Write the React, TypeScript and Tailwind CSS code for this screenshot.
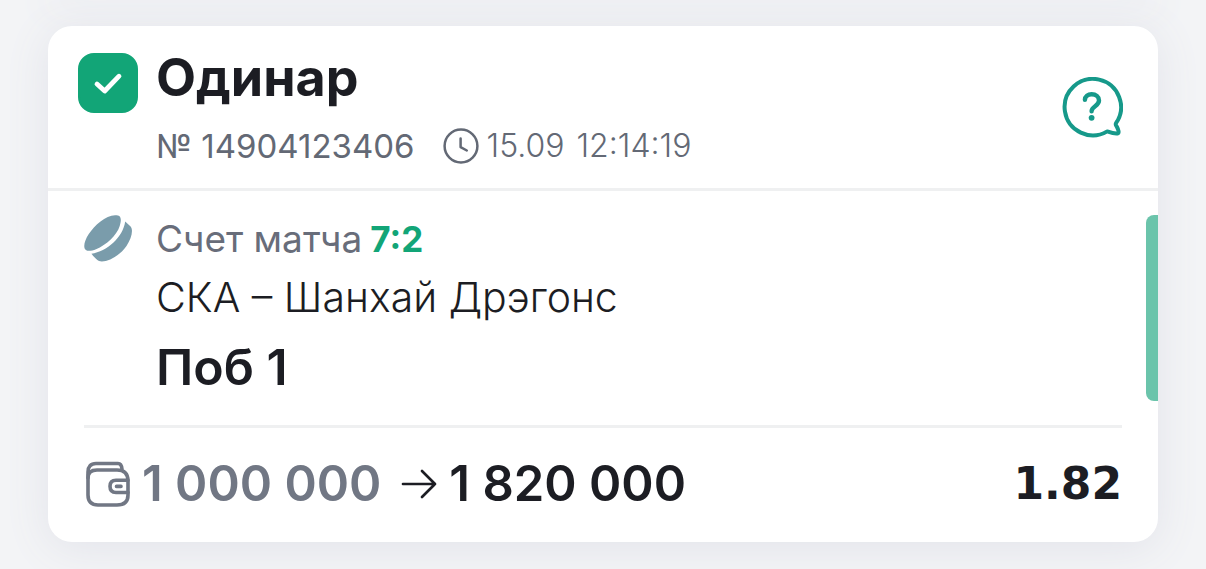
import React from "react";

function ClockIcon() {
  return (
    <svg viewBox="0 0 36 36" className="size-9 shrink-0" fill="none" stroke="currentColor" strokeWidth="2.5" strokeLinecap="round" strokeLinejoin="round" aria-hidden="true">
      <circle cx="18" cy="18" r="16.4" />
      <path d="M17.6 10.5v8.6l6.2 3.4" />
    </svg>
  );
}

function HelpIcon() {
  return (
    <svg viewBox="2 0 62 62" className="size-[62px]" fill="none" stroke="currentColor" strokeWidth="4" strokeLinecap="round" strokeLinejoin="round" aria-hidden="true">
      <path d="M57 46.2A28.2 28.2 0 1 0 48.2 54.4C51 55.4 54.6 56.9 58.4 56.5C60.6 56 59.3 52.5 58 50C57.2 48.6 56.1 47.8 57 46.2Z" />
      <path d="M25.9 22.9C26 19.2 29 17.2 32.6 17.2C36.8 17.2 40 19.7 40 23.5C40 29 32.6 29.3 32.6 34.2" strokeWidth="4.4" />
      <circle cx="32.6" cy="40.8" r="2.9" fill="currentColor" stroke="none" />
    </svg>
  );
}

function PuckIcon() {
  return (
    <svg viewBox="0 0 48 48" className="mt-6 h-12 w-12 text-[#7a9cab]" fill="currentColor" aria-hidden="true">
      <path d="M34 .5C37.4 1.5 37.4 5.4 35.7 11C33 20 22.4 30.1 12 34.2C8 35.8 4 36.6 1.9 35C-1.3 32.5 .5 25.5 4.6 19.2C11.2 9.3 24-2 34 .5Z" />
      <path d="M41.2 6.6L46.6 11.4C49.6 15 47.4 23.5 42.5 31C35.8 41 22.4 48.2 15 46.1C13 45.3 9.8 41.8 7.4 38.8C23 36.5 38.9 22.5 41.2 6.6Z" />
    </svg>
  );
}

function WalletIcon() {
  return (
    <svg viewBox="0 0 44 46" className="h-[46px] w-11 shrink-0" fill="none" stroke="currentColor" strokeWidth="3.6" strokeLinecap="round" strokeLinejoin="round" aria-hidden="true">
      <path d="M2 17V11Q2 2.5 10 2.5H32Q35.5 2.5 36 8.2" />
      <path d="M2 17Q2 9 11 9H31Q42 9 42 20V34Q42 44 31 44H12Q2 44 2 34Z" />
      <path d="M42 19.2H30Q24 19.2 24 25.3Q24 31.5 30 31.5H42M30.5 25.4H35" />
    </svg>
  );
}

function ArrowIcon() {
  return (
    <svg viewBox="0 0 36 30" className="h-[30px] w-9 shrink-0" fill="none" stroke="currentColor" strokeWidth="2.7" strokeLinecap="round" strokeLinejoin="round" aria-hidden="true">
      <path d="M2 15H34M21 2L34 15L21 28" />
    </svg>
  );
}

export default function App() {
  return (
    <main className="overflow-hidden bg-[#f3f4f6] px-12 pb-[27px] font-['Inter','Open_Sans',sans-serif] text-[#1c1d23]">
      <div className="mb-[26px] shadow-[0_0_40px_4px_#dfe0e8]" />
      <article className="relative rounded-3xl bg-white shadow-[0_6px_44px_#e2e3ea]">
        <header className="flex items-center justify-between border-b-3 border-[#eff0f1] pt-6 pr-[35px] pb-[22px] pl-[30px]">
          <div className="grid grid-cols-[60px_auto] gap-x-[18px]">
            <div className="relative mt-[3px] size-[60px]">
              <input id="bet" type="checkbox" defaultChecked aria-label="Одинар" className="peer block size-full appearance-none rounded-2xl border-2 border-[#12a577] checked:bg-[#12a577]" />
              <svg viewBox="0 0 60 60" className="pointer-events-none absolute inset-0 hidden peer-checked:block" fill="none" stroke="white" strokeWidth="4.8" strokeLinecap="round" strokeLinejoin="round" aria-hidden="true">
                <path d="M19 31L26.7 38L41 23.2" />
              </svg>
            </div>
            <div>
              <h2 className="text-[52px] leading-14 font-bold">Одинар</h2>
              <div className="mt-5 flex items-center text-[33px] leading-10 text-[#636975]">
                <span>№ 14904123406</span>
                <time className="ml-7 flex items-center gap-2 text-[32px] font-light">
                  <ClockIcon />
                  <span>15.09</span>
                  <span className="ml-1">12:14:19</span>
                </time>
              </div>
            </div>
          </div>
          <button type="button" aria-label="?" className="text-[#16998a]">
            <HelpIcon />
          </button>
        </header>

        <section className="flex items-start pl-9">
          <PuckIcon />
          <div className="ml-6 flex-1 pt-6 pb-[30px]">
            <p className="flex gap-2 text-[37px] leading-12 text-[#686d7a]">
              <span>Счет матча</span>
              <strong className="text-[35px] font-bold text-[#12a577]">7:2</strong>
            </p>
            <p className="mt-2.5 text-[41px] leading-12 font-light">СКА – Шанхай Дрэгонс</p>
            <p className="mt-[18px] text-[50px] leading-14 font-semibold">Поб 1</p>
          </div>
          <div className="mt-6 h-[186px] w-3 rounded-l-lg bg-[#6bc4ab]" />
        </section>

        <footer className="mx-9 flex items-center justify-between border-t-3 border-[#eff0f1] pt-7 pb-[30px] text-[49px] leading-14 font-semibold">
          <div className="flex items-center">
            <span className="flex items-center gap-3 pl-0.5 text-[#717784]">
              <WalletIcon />
              <span>1 000 000</span>
            </span>
            <span className="ml-5 flex items-center gap-3">
              <ArrowIcon />
              <span>1 820 000</span>
            </span>
          </div>
          <span className="font-['DejaVu_Sans',sans-serif] text-[44px] font-bold">1.82</span>
        </footer>
      </article>
    </main>
  );
}
